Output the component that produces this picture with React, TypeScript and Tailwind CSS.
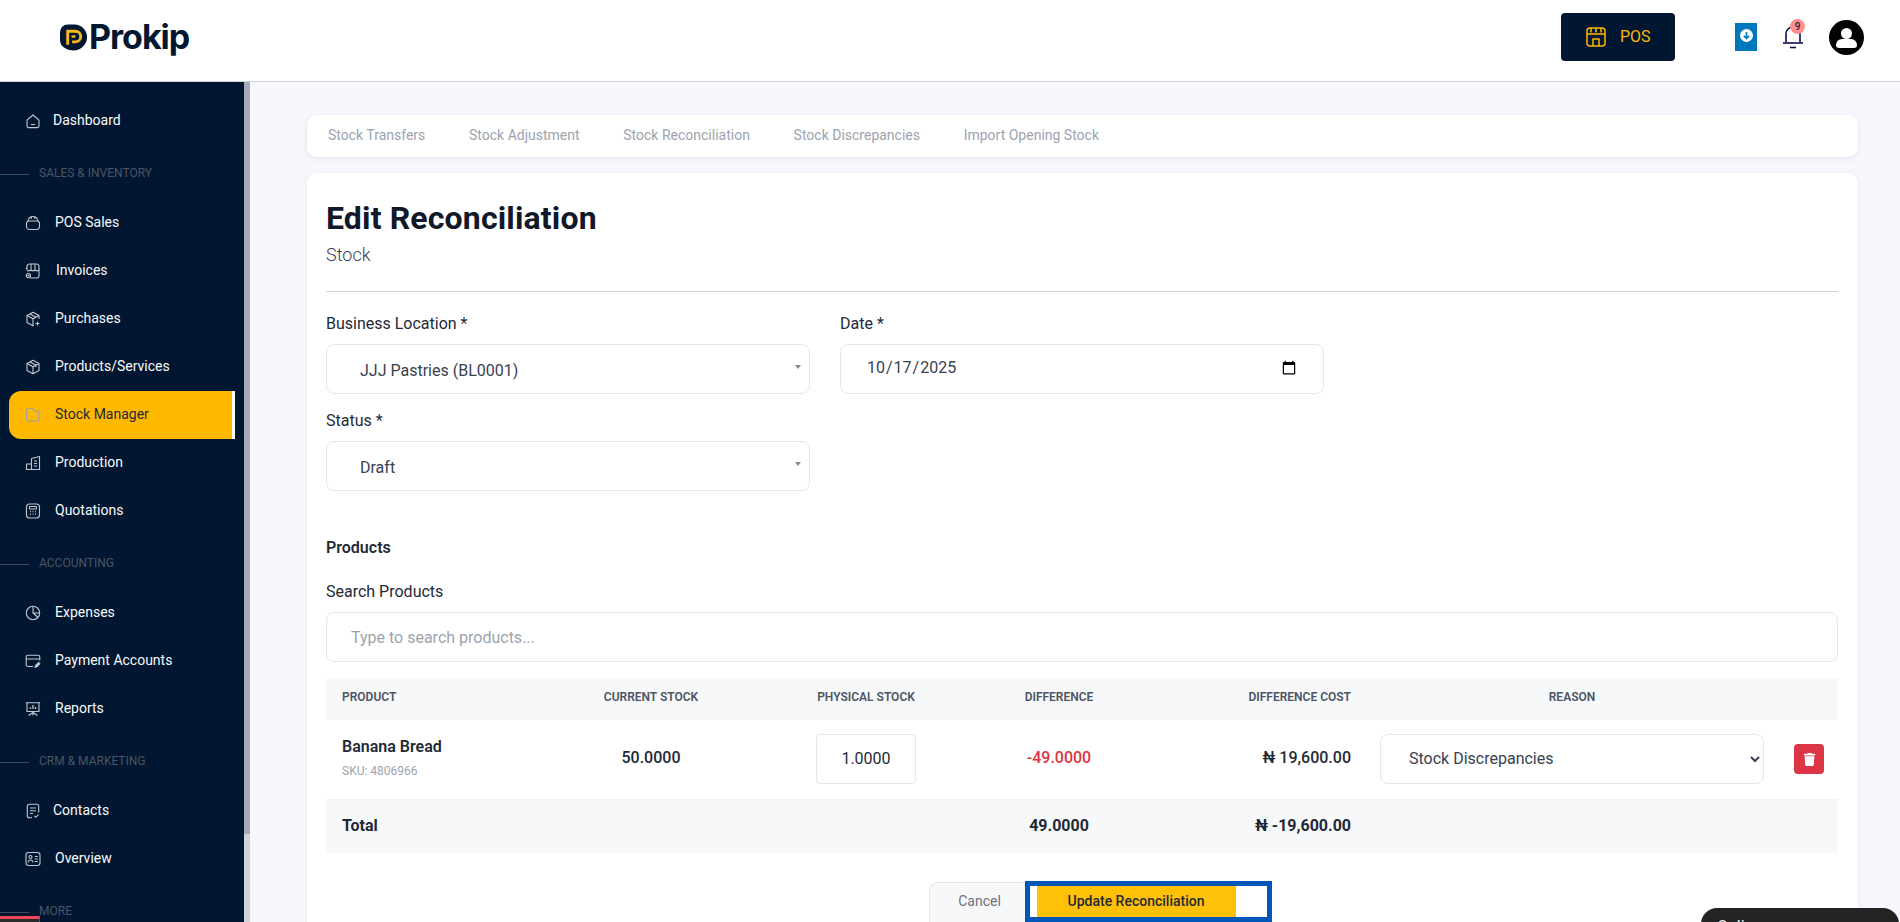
import { FaTrash } from "react-icons/fa";
import type { ReactNode } from "react";

const iconCls = "h-[16px] w-[16px] shrink-0";

const HomeIcon = () => (
  <svg viewBox="0 0 16 16" fill="none" stroke="currentColor" strokeWidth="1.1" className={iconCls}>
    <path d="M2 7.200 8 2l6 5.200v5.600a1.800 1.800 0 0 1-1.800 1.800H3.800A1.800 1.800 0 0 1 2 12.800Z" strokeLinejoin="round" />
    <path d="M6 11.500h4" />
  </svg>
);

const BagIcon = () => (
  <svg viewBox="0 0 16 16" fill="none" stroke="currentColor" strokeWidth="1.1" className={iconCls}>
    <path d="M1.500 8.500A2.500 2.500 0 0 1 4 6h8a2.500 2.500 0 0 1 2.500 2.500v2.800A3.200 3.200 0 0 1 11.300 14.500H4.700A3.200 3.200 0 0 1 1.500 11.300Z" />
    <path d="M3 6c.4-2.600 2.400-4.500 5-4.500S12.600 3.400 13 6M6.200 2v2M9.800 2v2" />
  </svg>
);

const ShopIcon = () => (
  <svg viewBox="0 0 16 16" fill="none" stroke="currentColor" strokeWidth="1.1" className={iconCls}>
    <path d="M2 6.500V3.500A2.500 2.500 0 0 1 4.500 1h7A2.500 2.500 0 0 1 14 3.500v9a2.500 2.500 0 0 1-2.500 2.500H5" />
    <path d="M1.500 6V4.500M2 6.500c0 1.800 4 1.800 4 0 0 1.800 4 1.800 4 0 0 1.800 4 1.800 4 0M6 1v5.500M10 1v5.500" />
    <circle cx="3.400" cy="12.600" r="2.100" />
    <path d="M2.400 12.600h2M3.400 11.600v2" strokeWidth=".8" />
  </svg>
);

const BoxPlusIcon = () => (
  <svg viewBox="0 0 16 16" fill="none" stroke="currentColor" strokeWidth="1.1" className={iconCls}>
    <path d="M14 8V4.500L8 1.200 2 4.500v7l6 3.300 1-.5" strokeLinejoin="round" />
    <path d="M2 4.500l6 3.300 6-3.300M8 7.800v7M5 2.900l6 3.300" />
    <path d="M12.500 10.500v4M10.500 12.500h4" />
  </svg>
);

const BoxIcon = () => (
  <svg viewBox="0 0 16 16" fill="none" stroke="currentColor" strokeWidth="1.1" className={iconCls}>
    <path d="M14 4.500v7l-6 3.300-6-3.300v-7l6-3.300Z" strokeLinejoin="round" />
    <path d="M2 4.500l6 3.300 6-3.300M8 7.800v7M5 2.900l6 3.300v2" />
  </svg>
);

const FolderIcon = () => (
  <svg viewBox="0 0 16 16" fill="none" stroke="currentColor" strokeWidth="1.1" className={iconCls}>
    <path d="M1.500 3.500A2 2 0 0 1 3.500 1.500h3.200a2 2 0 0 1 1.600.8l.6.800a2 2 0 0 0 1.600.9h1.300a2 2 0 0 1 2 2v6a2 2 0 0 1-2 2H4a2.500 2.500 0 0 1-2.500-2.500Z" />
  </svg>
);

const BuildingIcon = () => (
  <svg viewBox="0 0 16 16" fill="none" stroke="currentColor" strokeWidth="1.1" className={iconCls}>
    <path d="M1.500 14.500V9h5v5.500M6.500 14.500V3.500l8-2v13ZM.8 14.500h14.400M9 6h3M9 8.500h3M9 11h3" strokeLinejoin="round" />
  </svg>
);

const CalcIcon = () => (
  <svg viewBox="0 0 16 16" fill="none" stroke="currentColor" strokeWidth="1.1" className={iconCls}>
    <rect x="1.500" y="1" width="13" height="14" rx="3" />
    <rect x="4.500" y="3.500" width="7" height="2.500" rx=".5" />
    <path d="M5 8.500h.8M7.600 8.500h.8M10.200 8.500h.8M5 11h.8M7.600 11h.8M10.200 11h.8" strokeWidth="1.300" />
  </svg>
);

const PieIcon = () => (
  <svg viewBox="0 0 16 16" fill="none" stroke="currentColor" strokeWidth="1.1" className={iconCls}>
    <circle cx="8" cy="8" r="6.700" />
    <path d="M8 1.300V8l5 4.500M8 8h6.700" />
  </svg>
);

const CardEditIcon = () => (
  <svg viewBox="0 0 16 16" fill="none" stroke="currentColor" strokeWidth="1.1" className={iconCls}>
    <path d="M8 13.500H3A1.800 1.800 0 0 1 1.200 11.700V4A1.800 1.800 0 0 1 3 2.200h10A1.800 1.800 0 0 1 14.800 4v3.500M1.200 6h13.600" />
    <path d="M10 14.300l.5-1.800 3-3 1.300 1.300-3 3Z" fill="currentColor" />
  </svg>
);

const BoardIcon = () => (
  <svg viewBox="0 0 16 16" fill="none" stroke="currentColor" strokeWidth="1.1" className={iconCls}>
    <path d="M.9 1.700h14.200M2 1.700v8.800h12V1.700M8 10.500v4M8 11.500l-4.500 3M8 11.500l4.500 3" />
    <path d="M5.500 8V6.200M8 8V4M10.500 8V6" strokeWidth="1.300" />
  </svg>
);

const NoteCheckIcon = () => (
  <svg viewBox="0 0 16 16" fill="none" stroke="currentColor" strokeWidth="1.1" className={iconCls}>
    <path d="M7 14.700H4.300a2 2 0 0 1-2-2V3.300a2 2 0 0 1 2-2h7.400a2 2 0 0 1 2 2v6.200" />
    <path d="M5 5h6M5 7.800h6M5 10.500h3M9.500 13l1.300 1.300 2.700-2.700" />
  </svg>
);

const IdIcon = () => (
  <svg viewBox="0 0 16 16" fill="none" stroke="currentColor" strokeWidth="1.1" className={iconCls}>
    <rect x="1" y="1.500" width="14" height="13" rx="2.500" />
    <circle cx="5.500" cy="6" r="1.500" />
    <path d="M3 11.500c.3-1.800 1.200-2.500 2.500-2.500s2.200.7 2.500 2.500M9.800 5.500h3M9.800 8h3M9.800 10.500h3" />
  </svg>
);

type NavItemT = { label: string; icon: ReactNode; gap: string; active?: boolean };

const NavRow = ({ item }: { item: NavItemT }) => (
  <div
    className={`flex h-12 items-center pl-4 text-sm ${item.gap} ${
      item.active
        ? "ml-[9px] w-[226px] rounded-l-xl border-r-[3px] border-white bg-[#ffb800] text-[#1f2937]"
        : "ml-[9px] text-[#f9fafb]"
    }`}
  >
    <span className={item.active ? "text-[#9aa0a6]" : "text-[#c4c8ce]"}>{item.icon}</span>
    <span className="pb-[3px]">{item.label}</span>
  </div>
);

const SectionLabel = ({ label, spacing }: { label: string; spacing: string }) => (
  <div className={`flex items-center gap-[10px] ${spacing}`}>
    <div className="h-px w-[29px] bg-[#3d4a5c]" />
    <span className="pb-[2px] text-xs leading-4 text-[#4b5563] uppercase">{label}</span>
  </div>
);

const group1: NavItemT[] = [
  { label: "POS Sales", icon: <BagIcon />, gap: "gap-[14px]" },
  { label: "Invoices", icon: <ShopIcon />, gap: "gap-[15px]" },
  { label: "Purchases", icon: <BoxPlusIcon />, gap: "gap-[14px]" },
  { label: "Products/Services", icon: <BoxIcon />, gap: "gap-[14px]" },
  { label: "Stock Manager", icon: <FolderIcon />, gap: "gap-[14px]", active: true },
  { label: "Production", icon: <BuildingIcon />, gap: "gap-[14px]" },
  { label: "Quotations", icon: <CalcIcon />, gap: "gap-[14px]" },
];

const group2: NavItemT[] = [
  { label: "Expenses", icon: <PieIcon />, gap: "gap-[14px]" },
  { label: "Payment Accounts", icon: <CardEditIcon />, gap: "gap-[14px]" },
  { label: "Reports", icon: <BoardIcon />, gap: "gap-[14px]" },
];

const group3: NavItemT[] = [
  { label: "Contacts", icon: <NoteCheckIcon />, gap: "gap-[12px]" },
  { label: "Overview", icon: <IdIcon />, gap: "gap-[14px]" },
];

const Sidebar = () => (
  <aside className="flex h-[841px] w-[250px] shrink-0 overflow-hidden">
    <div className="relative w-[244px] bg-[#001631] pt-[15px]">
      <NavRow item={{ label: "Dashboard", icon: <HomeIcon />, gap: "gap-[12px]" }} />
      <SectionLabel label="Sales &amp; Inventory" spacing="mt-[20px] mb-[16px]" />
      {group1.map((item) => (
        <NavRow key={item.label} item={item} />
      ))}
      <SectionLabel label="Accounting" spacing="mt-[20px] mb-[16px]" />
      {group2.map((item) => (
        <NavRow key={item.label} item={item} />
      ))}
      <SectionLabel label="CRM &amp; Marketing" spacing="mt-[20px] mb-[16px]" />
      {group3.map((item) => (
        <NavRow key={item.label} item={item} />
      ))}
      <SectionLabel label="More" spacing="mt-[20px]" />
      <div className="absolute bottom-0 left-0 h-[7px] w-10 border-t-[3px] border-r border-t-[#f0475a] border-r-[#4b5563] bg-[#2b2b2b]" />
    </div>
    <div className="w-[6px] bg-[#d1d3d9]">
      <div className="h-[752px] bg-[#a6abb7]" />
    </div>
  </aside>
);

const Header = () => (
  <header className="flex h-[82px] items-center border-b border-[#d1d5db] bg-white pr-[36px] pb-[7px] pl-[60px]">
    <div className="flex items-center gap-[2px]">
      <svg viewBox="1 1 28 27" className="h-[27px] w-[27px]">
        <path d="M9 1h7a13 13 0 0 1 13 13 14 14 0 0 1-14 14c-3 0-5-.5-8-2-4-2-6-5-6-10V9a8 8 0 0 1 8-8Z" fill="#001631" />
        <path d="M9 22V8h8a5.500 5.500 0 0 1 0 11h-3.500" fill="none" stroke="#f5b81f" strokeWidth="3" />
        <path d="M13 13.500h4" stroke="#f5b81f" strokeWidth="2.500" />
      </svg>
      <span className="font-['Inter',sans-serif] text-[34px] leading-none font-bold tracking-[-1px] text-[#001631]">
        Prokip
      </span>
    </div>

    <div className="ml-auto flex h-12 w-[114px] items-center gap-[14px] rounded bg-[#001631] pl-[25px] text-base text-[#ffb800]">
      <svg viewBox="0 0 20 20" fill="none" stroke="currentColor" strokeWidth="1.500" className="h-5 w-5">
        <rect x="1" y="1" width="18" height="18" rx="3" />
        <path d="M1 7h18M5 1v4.500M10 1v4.500M15 1v4.500M7 19v-7h6v7" />
      </svg>
      <span>POS</span>
    </div>

    <div className="ml-[60px] flex h-7 w-[22px] items-center justify-center bg-[#0077bd] pb-1">
      <svg viewBox="0 0 14 14" className="h-[13px] w-[13px]">
        <circle cx="7" cy="7" r="7" fill="#fff" />
        <path d="M7 3.200v7M4 7.300l3 3 3-3" fill="none" stroke="#0077bd" strokeWidth="1.800" />
      </svg>
    </div>

    <div className="relative ml-[26px] h-[26px] w-[20px]">
      <svg viewBox="0 0 20 26" fill="none" stroke="#0a0f4a" strokeWidth="1.600" className="h-[26px] w-[20px]">
        <path d="M3 18V10a7 7 0 0 1 14 0v8" />
        <path d="M0 19h20" />
        <path d="M7 23.500h6" />
      </svg>
      <span className="absolute -top-[5px] left-[7px] flex h-[15px] w-[15px] items-center justify-center rounded-full bg-[#ff8f8f] text-[10px] leading-none font-medium text-[#1f2937]">
        9
      </span>
    </div>

    <div className="relative ml-[26px] h-[35px] w-[35px] overflow-hidden rounded-full bg-black">
      <div className="absolute top-[8px] left-[12px] h-[11px] w-[11px] rounded-full bg-white" />
      <div className="absolute top-[19px] left-[7px] h-[9px] w-[21px] rounded-t-lg rounded-b-sm bg-white" />
    </div>
  </header>
);

const fieldCls =
  "h-[50px] rounded-lg border border-[#e5e7eb] bg-white text-base text-[#374151] outline-none";

const FakeSelect = ({ value }: { value: string }) => (
  <div className={`${fieldCls} relative flex w-[484px] items-center pt-[3px] pl-[33px]`}>
    {value}
    <span className="absolute top-[20px] right-[8px] h-0 w-0 border-x-[3px] border-t-[4px] border-x-transparent border-t-[#888]" />
  </div>
);

const tabs = [
  "Stock Transfers",
  "Stock Adjustment",
  "Stock Reconciliation",
  "Stock Discrepancies",
  "Import Opening Stock",
];

const thCls = "px-4 pb-1 text-xs font-semibold text-[#4b5563] uppercase";

const MainContent = () => (
  <main className="min-w-0 flex-1 pt-[33px] pr-[42px] pl-[57px]">
    <nav className="flex h-[42px] items-center gap-[43.7px] rounded-[10px] bg-white pb-[3px] pl-[21px] text-sm text-[#9ca3af] shadow-[0_2px_6px_rgba(15,23,42,0.08)]">
      {tabs.map((tab) => (
        <span key={tab}>{tab}</span>
      ))}
    </nav>

    <section className="mt-4 h-[900px] rounded-[10px] bg-white pt-[22px] pr-5 pl-[19px] shadow-[0_0_6px_rgba(15,23,42,0.05)]">
      <h1 className="text-[32px] leading-[47px] font-bold tracking-[0.15px] text-[#111827]">Edit Reconciliation</h1>
      <p className="text-lg leading-[26px] font-light text-[#374151]">Stock</p>
      <div className="mt-[23px] h-px bg-[#d1d5db]" />

      <div className="mt-[21px] flex gap-[30px]">
        <div>
          <p className="mb-[9px] text-base leading-[22px] text-[#1f2937]">Business Location *</p>
          <FakeSelect value="JJJ Pastries (BL0001)" />
          <p className="mt-[16px] mb-[9px] text-base leading-[22px] text-[#1f2937]">Status *</p>
          <FakeSelect value="Draft" />
        </div>
        <div>
          <p className="mb-[9px] text-base leading-[22px] text-[#1f2937]">Date *</p>
          <input
            type="date"
            defaultValue="2025-10-17"
            className={`${fieldCls} w-[484px] pr-[24px] pb-[3px] pl-[25px] text-[#1f2937]`}
          />
        </div>
      </div>

      <p className="mt-[46px] text-base leading-[22px] font-semibold text-[#1f2937]">Products</p>
      <p className="mt-[22px] text-base leading-[22px] text-[#1f2937]">Search Products</p>
      <input
        placeholder="Type to search products..."
        className={`${fieldCls} mt-[9px] w-full px-6 placeholder:text-[#9ca3af]`}
      />

      <table className="mt-4 w-full table-fixed border-collapse">
        <colgroup>
          <col className="w-[215px]" />
          <col className="w-[220px]" />
          <col className="w-[210px]" />
          <col className="w-[176px]" />
          <col className="w-[220px]" />
          <col />
          <col className="w-[61px]" />
        </colgroup>
        <thead>
          <tr className="h-[42px] bg-[#f7f8fa]">
            <th className={`${thCls} text-left`}>Product</th>
            <th className={`${thCls} text-center`}>Current Stock</th>
            <th className={`${thCls} text-center`}>Physical Stock</th>
            <th className={`${thCls} text-center`}>Difference</th>
            <th className={`${thCls} text-right`}>Difference Cost</th>
            <th className={`${thCls} text-center`}>Reason</th>
            <th />
          </tr>
        </thead>
        <tbody>
          <tr className="h-[79px] border-b border-[#f1f2f4] text-base font-medium text-[#1f2937]">
            <td className="px-4 pb-1">
              <p className="leading-[22px] font-semibold">Banana Bread</p>
              <p className="mt-[5px] text-xs leading-4 font-normal text-[#9ca3af]">SKU: 4806966</p>
            </td>
            <td className="pb-[3px] text-center">50.0000</td>
            <td className="text-center">
              <input
                defaultValue="1.0000"
                className="h-[50px] w-[100px] rounded border border-[#e5e7eb] pb-[2px] text-center font-normal outline-none"
              />
            </td>
            <td className="pb-[3px] text-center text-[#dc3545]">-49.0000</td>
            <td className="px-4 pb-[3px] text-right">₦ 19,600.00</td>
            <td className="px-[13px]">
              <select
                defaultValue="Stock Discrepancies"
                className={`${fieldCls} w-full pb-[2px] pl-6 font-normal text-[#111827]`}
              >
                <option>Stock Discrepancies</option>
              </select>
            </td>
            <td>
              <button className="ml-[17px] flex h-[30px] w-[30px] items-center justify-center rounded bg-[#dc3545] text-white">
                <FaTrash className="h-[13px] w-[13px]" />
              </button>
            </td>
          </tr>
          <tr className="h-[54px] bg-[#f7f8fa] text-base font-bold text-[#1f2937]">
            <td className="px-4">Total</td>
            <td />
            <td />
            <td className="text-center">49.0000</td>
            <td className="px-4 text-right">₦ -19,600.00</td>
            <td />
            <td />
          </tr>
        </tbody>
      </table>

      <div className="mt-[29px] flex justify-center">
        <button className="h-[50px] w-[108px] rounded-l-lg border border-[#e5e7eb] bg-[#f7f8fa] pr-[6px] pb-[12px] text-sm text-[#6b7280]">
          Cancel
        </button>
        <div className="relative">
          <button className="h-[50px] w-[199px] bg-[#ffc107] pb-[12px] text-sm font-medium text-[#1f2937]">
            Update Reconciliation
          </button>
          {/* focus ring sits over the button */}
          <div className="absolute -top-[1px] -left-[12px] h-[41px] w-[247px] border-[5px] border-[#0057b8]">
            <div className="absolute top-0 left-0 h-full w-[7px] bg-white" />
            <div className="absolute top-0 right-0 h-full w-[31px] bg-white" />
          </div>
        </div>
      </div>
    </section>
  </main>
);

export default function App() {
  return (
    <div className="relative h-screen overflow-hidden bg-[#f7f8fd] font-['Roboto',sans-serif]">
      <Header />
      <div className="flex">
        <Sidebar />
        <MainContent />
      </div>
      <div className="absolute top-[908px] left-[1701px] h-[40px] w-[198px] rounded-t-2xl bg-[#222423] pt-[7px] pl-[16px] text-base text-white">
        Online
      </div>
    </div>
  );
}
